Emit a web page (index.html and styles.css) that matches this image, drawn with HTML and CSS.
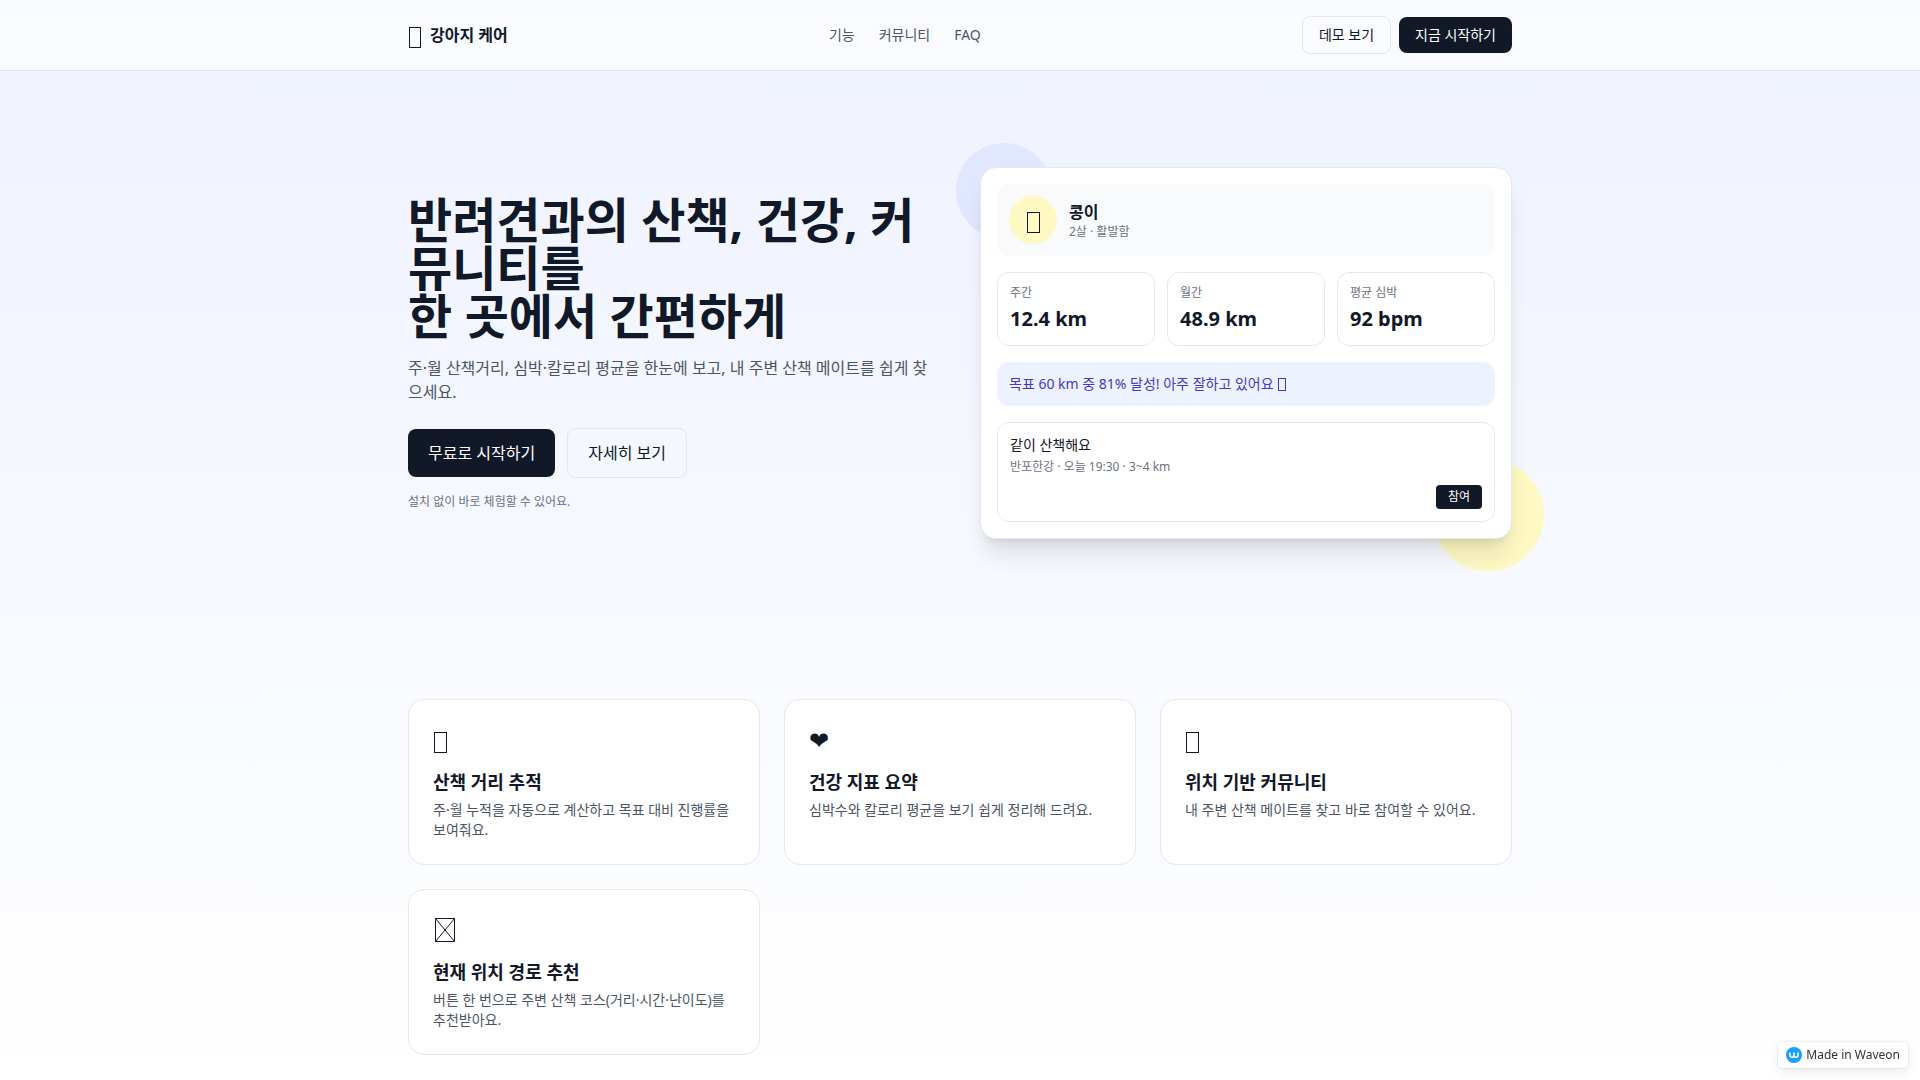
FILE: index.html
```
<!DOCTYPE html>
<html lang="ko">
<head>
    <meta charset="UTF-8">
    <meta name="viewport" content="width=device-width, initial-scale=1.0">
    <title>강아지 케어</title>
    <link rel="stylesheet" href="styles.css">
</head>
<body>

<header class="header">
    <div class="container header-inner">
        <a href="#" class="logo">
            <svg class="icon" width="14" height="32" viewBox="0 0 14 32" aria-hidden="true"><rect x="1.5" y="8.5" width="11" height="20"/></svg>
            <span>강아지 케어</span>
        </a>
        <nav class="nav">
            <a href="#features">기능</a>
            <a href="#community">커뮤니티</a>
            <a href="#faq">FAQ</a>
        </nav>
        <div class="header-actions">
            <button class="btn btn-outline">데모 보기</button>
            <button class="btn btn-dark">지금 시작하기</button>
        </div>
    </div>
</header>

<main>
    <section class="container hero">
        <div class="hero-text">
            <h1>반려견과의 산책, 건강, 커뮤니티를<br>한 곳에서 간편하게</h1>
            <p class="lead">주·월 산책거리, 심박·칼로리 평균을 한눈에 보고, 내 주변 산책 메이트를 쉽게 찾으세요.</p>
            <div class="hero-buttons">
                <button class="btn btn-large btn-dark">무료로 시작하기</button>
                <button class="btn btn-large btn-outline">자세히 보기</button>
            </div>
            <p class="note">설치 없이 바로 체험할 수 있어요.</p>
        </div>

        <div class="preview">
            <div class="blob blob-indigo"></div>
            <div class="blob blob-yellow"></div>
            <div class="preview-card">
                <div class="profile">
                    <div class="avatar">
                        <svg class="icon" width="14" height="32" viewBox="0 0 14 32" aria-hidden="true"><rect x="1.5" y="8.5" width="12" height="20"/></svg>
                    </div>
                    <div>
                        <div class="profile-name">콩이</div>
                        <div class="small">2살 · 활발함</div>
                    </div>
                </div>
                <div class="stats">
                    <div class="stat">
                        <div class="small">주간</div>
                        <div class="stat-value">12.4 km</div>
                    </div>
                    <div class="stat">
                        <div class="small">월간</div>
                        <div class="stat-value">48.9 km</div>
                    </div>
                    <div class="stat">
                        <div class="small">평균 심박</div>
                        <div class="stat-value">92 bpm</div>
                    </div>
                </div>
                <div class="goal">
                    목표 60 km 중 81% 달성! 아주 잘하고 있어요
                    <svg class="icon icon-inline" width="9" height="13" viewBox="0 0 9 13" aria-hidden="true"><rect x="1.5" y="0.5" width="7" height="12"/></svg>
                </div>
                <div class="walk" id="community">
                    <div class="walk-title">같이 산책해요</div>
                    <div class="small">반포한강 · 오늘 19:30 · 3~4 km</div>
                    <button class="btn-join">참여</button>
                </div>
            </div>
        </div>
    </section>

    <section class="container features" id="features">
        <article class="feature">
            <div class="feature-icon">
                <svg class="icon" width="14" height="32" viewBox="0 0 14 32" aria-hidden="true"><rect x="1.5" y="8.5" width="12" height="20"/></svg>
            </div>
            <h3>산책 거리 추적</h3>
            <p>주·월 누적을 자동으로 계산하고 목표 대비 진행률을 보여줘요.</p>
        </article>
        <article class="feature">
            <div class="feature-icon">❤</div>
            <h3>건강 지표 요약</h3>
            <p>심박수와 칼로리 평균을 보기 쉽게 정리해 드려요.</p>
        </article>
        <article class="feature">
            <div class="feature-icon">
                <svg class="icon" width="14" height="32" viewBox="0 0 14 32" aria-hidden="true"><rect x="1.5" y="8.5" width="12" height="20"/></svg>
            </div>
            <h3>위치 기반 커뮤니티</h3>
            <p>내 주변 산책 메이트를 찾고 바로 참여할 수 있어요.</p>
        </article>
        <article class="feature">
            <div class="feature-icon">
                <svg class="icon" width="24" height="32" viewBox="0 0 24 32" aria-hidden="true"><path d="M2.5 4.5h19v23h-19zl19 23M21.5 4.5l-19 23"/></svg>
            </div>
            <h3>현재 위치 경로 추천</h3>
            <p>버튼 한 번으로 주변 산책 코스(거리·시간·난이도)를 추천받아요.</p>
        </article>
    </section>
</main>

<a href="#" class="badge">
    <svg width="16" height="16" viewBox="0 0 16 16" aria-hidden="true">
        <circle cx="8" cy="8" r="8" fill="#1a9fff"/>
        <path d="M4 6v2.3a2 2 0 0 0 4 0V6M8 8.3a2 2 0 0 0 4 0V6" fill="none" stroke="#fff" stroke-width="1.5" stroke-linecap="round"/>
    </svg>
    <span>Made in Waveon</span>
</a>

</body>
</html>
```

FILE: styles.css
```
* {
    box-sizing: border-box;
    margin: 0;
    padding: 0;
}

body {
    min-height: 100vh;
    font-family: "Noto Sans", "Noto Sans CJK KR", sans-serif;
    font-size: 16px;
    line-height: 24px;
    color: #111827;
    background: linear-gradient(to bottom, #eef2ff, #ffffff);
}

a {
    color: inherit;
    text-decoration: none;
}

button {
    font-family: inherit;
    cursor: pointer;
}

.container {
    max-width: 1152px;
    margin: 0 auto;
    padding: 0 24px;
}

.icon {
    display: block;
    fill: none;
    stroke: currentColor;
}

.icon-inline {
    display: inline-block;
    vertical-align: -2px;
}

/* header */
.header {
    position: sticky;
    top: 0;
    z-index: 10;
    background: rgba(255, 255, 255, 0.7);
    border-bottom: 1px solid #e5e7eb;
}

.header-inner {
    display: flex;
    align-items: center;
    justify-content: space-between;
    padding-top: 16px;
    padding-bottom: 16px;
}

.logo {
    display: flex;
    align-items: center;
    gap: 8px;
    font-weight: 700;
}

.nav {
    display: flex;
    gap: 24px;
    font-size: 14px;
    line-height: 20px;
    color: #4b5563;
}

.header-actions {
    display: flex;
    align-items: center;
    gap: 8px;
}

.btn {
    padding: 8px 16px;
    border: none;
    border-radius: 8px;
    font-size: 14px;
    line-height: 20px;
}

.btn-large {
    padding: 12px 20px;
    font-size: 16px;
    line-height: 24px;
}

.btn-dark {
    background: #111827;
    color: #fff;
}

.btn-outline {
    background: transparent;
    border: 1px solid #e5e7eb;
    color: #111827;
}

/* hero */
.hero {
    display: grid;
    grid-template-columns: 1fr 1fr;
    gap: 40px;
    align-items: center;
    padding-top: 96px;
    padding-bottom: 96px;
}

.hero h1 {
    font-size: 48px;
    line-height: 48px;
    font-weight: 700;
}

.lead {
    margin-top: 16px;
    color: #4b5563;
}

.hero-buttons {
    display: flex;
    align-items: center;
    gap: 12px;
    margin-top: 24px;
}

.note {
    margin-top: 16px;
    font-size: 12px;
    line-height: 16px;
    color: #6b7280;
}

.preview {
    position: relative;
}

.blob {
    position: absolute;
    border-radius: 50%;
}

.blob-indigo {
    top: -24px;
    left: -24px;
    width: 96px;
    height: 96px;
    background: #e0e7ff;
}

.blob-yellow {
    right: -32px;
    bottom: -32px;
    width: 112px;
    height: 112px;
    background: #fef9c3;
}

.preview-card {
    position: relative;
    display: flex;
    flex-direction: column;
    gap: 16px;
    padding: 16px;
    background: #fff;
    border: 1px solid #e5e7eb;
    border-radius: 16px;
    box-shadow: 0 20px 25px -5px rgba(0, 0, 0, 0.1), 0 8px 10px -6px rgba(0, 0, 0, 0.1);
}

.small {
    font-size: 12px;
    line-height: 16px;
    color: #6b7280;
}

.profile {
    display: flex;
    align-items: center;
    gap: 12px;
    padding: 12px;
    background: #f9fafb;
    border-radius: 12px;
}

.avatar {
    display: flex;
    align-items: center;
    justify-content: center;
    width: 48px;
    height: 48px;
    border-radius: 50%;
    background: #fef9c3;
}

.profile-name {
    font-weight: 700;
}

.stats {
    display: grid;
    grid-template-columns: repeat(3, 1fr);
    gap: 12px;
}

.stat {
    padding: 12px;
    border: 1px solid #e5e7eb;
    border-radius: 12px;
}

.stat-value {
    margin-top: 4px;
    font-size: 20px;
    line-height: 28px;
    font-weight: 700;
}

.goal {
    padding: 12px;
    border-radius: 12px;
    background: #eef2ff;
    color: #4338ca;
    font-size: 14px;
    line-height: 20px;
}

.walk {
    display: flex;
    flex-direction: column;
    padding: 12px;
    border: 1px solid #e5e7eb;
    border-radius: 12px;
}

.walk-title {
    margin-bottom: 4px;
    font-size: 14px;
    line-height: 20px;
}

.btn-join {
    align-self: flex-end;
    margin-top: 10px;
    padding: 4px 12px;
    border: none;
    border-radius: 4px;
    background: #111827;
    color: #fff;
    font-size: 12px;
    line-height: 16px;
}

/* features */
.features {
    display: grid;
    grid-template-columns: repeat(3, 1fr);
    gap: 24px;
    padding-top: 64px;
    padding-bottom: 24px;
}

.feature {
    padding: 24px;
    background: #fff;
    border: 1px solid #e5e7eb;
    border-radius: 16px;
}

.feature-icon {
    font-size: 24px;
    line-height: 32px;
}

.feature h3 {
    margin-top: 12px;
    font-size: 18px;
    line-height: 28px;
    font-weight: 700;
}

.feature p {
    margin-top: 4px;
    font-size: 14px;
    line-height: 20px;
    color: #4b5563;
}

/* floating badge */
.badge {
    position: fixed;
    right: 12px;
    bottom: 12px;
    z-index: 20;
    display: flex;
    align-items: center;
    gap: 4px;
    padding: 5px 8px;
    background: #fff;
    border-radius: 4px;
    box-shadow: 0 0 2px rgba(0, 0, 0, 0.2), 0 4px 12px rgba(0, 0, 0, 0.08);
    color: #333;
    font-size: 12px;
    line-height: 16px;
}
```
